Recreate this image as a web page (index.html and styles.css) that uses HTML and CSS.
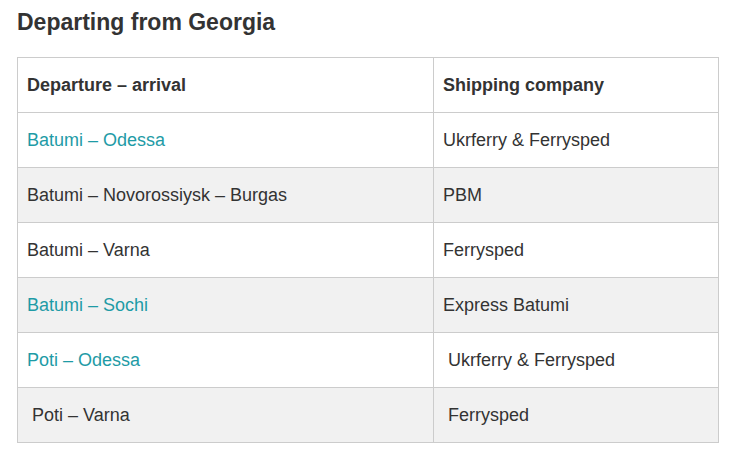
FILE: index.html
```html
<!DOCTYPE html>
<html>
<head>
<meta charset="utf-8">
<link rel="stylesheet" href="styles.css">
</head>
<body>
<h2 class="title">Departing from Georgia</h2>
<table class="routes">
  <thead>
    <tr><th class="col-route">Departure – arrival</th><th>Shipping company</th></tr>
  </thead>
  <tbody>
    <tr><td><a href="#">Batumi – Odessa</a></td><td>Ukrferry &amp; Ferrysped</td></tr>
    <tr><td>Batumi – Novorossiysk – Burgas</td><td>PBM</td></tr>
    <tr><td>Batumi – Varna</td><td>Ferrysped</td></tr>
    <tr><td><a href="#">Batumi – Sochi</a></td><td>Express Batumi</td></tr>
    <tr><td><a href="#">Poti – Odessa</a></td><td>&nbsp;Ukrferry &amp; Ferrysped</td></tr>
    <tr><td>&nbsp;Poti – Varna</td><td>&nbsp;Ferrysped</td></tr>
  </tbody>
</table>
</body>
</html>
```
FILE: styles.css
```css
html, body {
  margin: 0;
  padding: 0;
  background: #fff;
}
body {
  padding: 7px 17px;
  font-family: "Liberation Sans", Arial, sans-serif;
  color: #333;
}
.title {
  margin: 0 0 20px 0;
  font-size: 23px;
  line-height: 30px;
  font-weight: bold;
  color: #333;
}
.routes {
  border-collapse: collapse;
  width: 702px;
  font-size: 18px;
}
.routes th, .routes td {
  border: 1px solid #ccc;
  height: 55px;
  padding: 0 9px;
  text-align: left;
  vertical-align: middle;
  box-sizing: border-box;
}
.routes th {
  font-weight: bold;
}
.col-route {
  width: 416px;
}
.routes tbody tr:nth-child(even) {
  background: #f1f1f1;
}
.routes a {
  color: #1e9ba6;
  text-decoration: none;
}
```
